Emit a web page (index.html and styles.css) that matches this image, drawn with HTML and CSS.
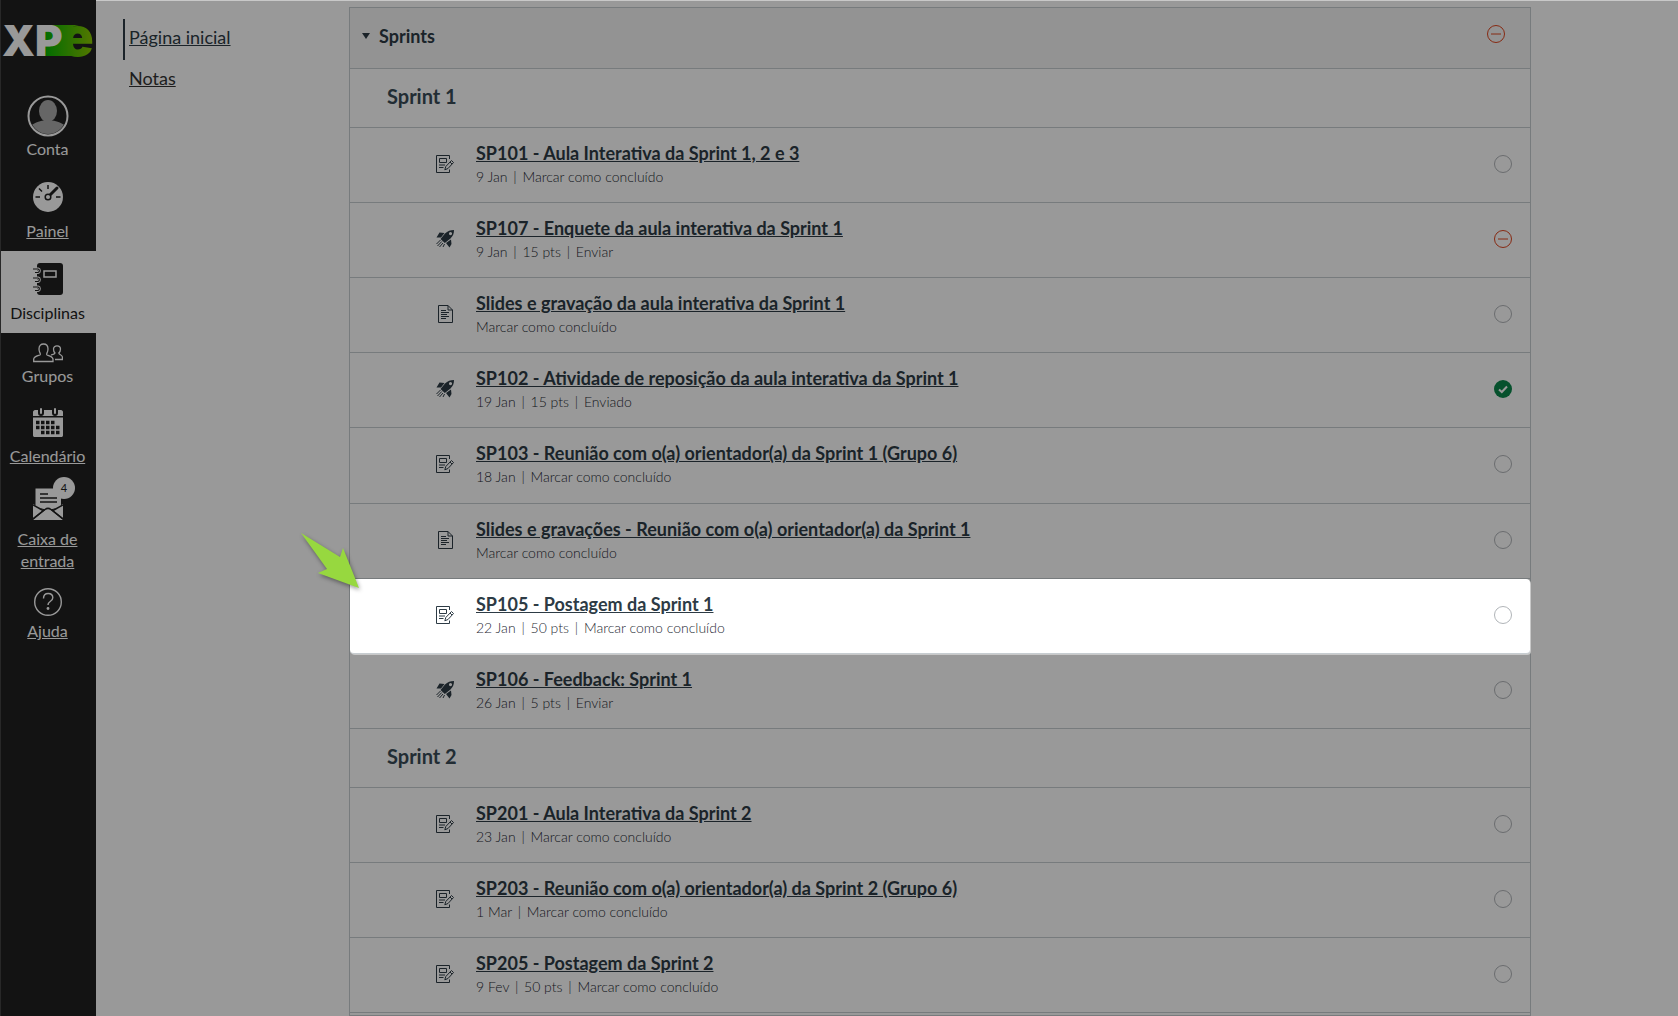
FILE: index.html
```
<!DOCTYPE html>
<html lang="pt-BR">

<head>
  <meta charset="UTF-8">
  <meta name="viewport" content="width=device-width, initial-scale=1">
  <title>Sprints</title>
  <link rel="stylesheet" href="styles.css">
</head>

<body>
  <svg class="symbols" aria-hidden="true">
    <symbol id="assignment" viewBox="0 0 18 18">
      <path d="M13.500 4V0.500H0.500V17.500H13.500V14.500" fill="none" stroke="currentColor"/>
      <path d="M3.500 3.500H10.500V7.500H3.500Z" fill="none" stroke="currentColor"/>
      <path d="M3 10H9M3 12.500H7.500" stroke="currentColor"/>
      <path d="M8.800 14.800L9.800 11.500L15.500 5.500L17.500 7.500L12 13.500Z" fill="none" stroke="currentColor"/>
      <path d="M14 7L16 9" stroke="currentColor"/>
    </symbol>
    <symbol id="page" viewBox="0 0 18 18">
      <path d="M2.500 0.500H12L16.500 5V17.500H2.500Z" fill="none" stroke="currentColor"/>
      <path d="M12 0.500V5H16.500" fill="none" stroke="currentColor"/>
      <path d="M5 5.500H10M5 7.500H13M5 9.500H11M5 11.500H13M5 13.500H10" stroke="currentColor"/>
    </symbol>
    <symbol id="quiz" viewBox="0 0 18 18">
      <path fill-rule="evenodd" d="M18 0C14.500 0 11.500 1 9 3.500L4.500 9L8.800 13L14.500 8.500C17 6 18 3.500 18 0ZM14.500 2A1.600 1.600 0 1 1 14.500 5.200A1.600 1.600 0 1 1 14.500 2Z" fill="currentColor"/>
      <path d="M8.500 3L3.500 2.500L0.500 7.500L5 7.500ZM15 9.500L15.500 14L13.500 17.500L10 13Z" fill="currentColor"/>
      <path d="M4.500 10L0.500 14M5.800 11.500L1.500 16M7 13L3.500 17M8.500 14L7 17" stroke="currentColor" fill="none"/>
    </symbol>
    <symbol id="todo" viewBox="0 0 18 18">
      <circle cx="9" cy="9" r="8.500" fill="none" stroke="currentColor"/>
    </symbol>
    <symbol id="minus" viewBox="0 0 18 18">
      <circle cx="9" cy="9" r="8.500" fill="none" stroke="currentColor"/>
      <path d="M4 9H14" stroke="currentColor"/>
    </symbol>
    <symbol id="done" viewBox="0 0 18 18">
      <circle cx="9" cy="9" r="9" fill="currentColor"/>
      <path d="M5 9.500L7.800 12L13 6.500" fill="none" stroke="#fff" stroke-width="2"/>
    </symbol>
  </svg>

  <div class="window-edge"></div>
  <div class="app">
    <nav class="global-nav">
      <a class="logo" href="#" aria-label="XPe">
        <svg width="95" height="83" viewBox="0 0 95 83">
          <defs>
            <linearGradient id="brand" gradientUnits="userSpaceOnUse" x1="43" y1="0" x2="92" y2="0">
              <stop offset="0" stop-color="#00b400"/>
              <stop offset="1" stop-color="#8cc800"/>
            </linearGradient>
          </defs>
          <path d="M42 56V25H78C68 26 65 34 65 41C65 49 70 56 78 56Z" fill="url(#brand)"/>
          <text class="logo-e" x="60" y="56" fill="url(#brand)">e</text>
          <text class="logo-xp" x="1" y="56">XP</text>
        </svg>
      </a>
      <a class="nav-item nav-item--plain" href="#">
        <svg width="42" height="44" viewBox="0 0 42 44">
          <defs>
            <clipPath id="face"><circle cx="21" cy="22" r="18"/></clipPath>
          </defs>
          <g clip-path="url(#face)" fill="#aaa">
            <ellipse cx="21" cy="17" rx="9" ry="11"/>
            <path d="M2 43V35C5 29 11 27 21 26C31 27 37 29 40 35V43Z"/>
          </g>
          <circle cx="21" cy="22" r="19.500" fill="none" stroke="#fff" stroke-width="2"/>
        </svg>
        Conta
      </a>
      <a class="nav-item" href="#">
        <svg width="30" height="41" viewBox="0 0 30 41">
          <circle cx="15" cy="18" r="15" fill="#fff"/>
          <path d="M15 6V10M2.500 18H7M23 18H27.500M6 9.500L9 12.500" stroke="#212121" stroke-width="1.500"/>
          <path d="M16 17L24 9" stroke="#212121" stroke-width="3" stroke-linecap="round"/>
          <circle cx="15" cy="18" r="2.800" fill="#fff" stroke="#212121" stroke-width="1.500"/>
        </svg>
        <span>Painel</span>
      </a>
      <a class="nav-item nav-item--active" href="#" aria-current="page">
        <svg width="30" height="41" viewBox="0 0 30 41">
          <path d="M7 2H27C29 2 30 3 30 5V31C30 33 29 34 27 34H7C5 34 4 33 4 31V5C4 3 5 2 7 2Z" fill="#212121"/>
          <path d="M11 10H23V16H11Z" fill="none" stroke="#fff" stroke-width="1.500"/>
          <path d="M0 8H5A1.800 1.800 0 0 1 5 11.500H2M0 17H5A1.800 1.800 0 0 1 5 20.500H2M0 26H5A1.800 1.800 0 0 1 5 29.500H2" fill="none" stroke="#fff" stroke-width="3"/>
          <path d="M0 8H5A1.800 1.800 0 0 1 5 11.500H2M0 17H5A1.800 1.800 0 0 1 5 20.500H2M0 26H5A1.800 1.800 0 0 1 5 29.500H2" fill="none" stroke="#212121" stroke-width="1.200"/>
        </svg>
        Disciplinas
      </a>
      <a class="nav-item nav-item--plain" href="#">
        <svg width="30" height="22" viewBox="0 0 30 22">
          <g fill="none" stroke="#fff" stroke-width="1.300">
            <path d="M0.700 18.500V16C1 13.500 4 13 7 12C8.500 11 6 10 6 6C6 2.500 8 1 10.500 1C13 1 15 2.500 15 6C15 10 12.500 11 14 12C17 13 19.500 13.500 20 16V18.500Z"/>
            <path d="M18 12C19.500 11.500 21.500 11.500 22 10C20.500 9 20.500 7 20.500 6C20.500 4 22 2.800 24 2.800C26 2.800 27.500 4 27.500 6C27.500 8 27 9 25.800 10C26 12 29 11.500 29.400 14V16.500H22"/>
          </g>
        </svg>
        Grupos
      </a>
      <a class="nav-item" href="#">
        <svg width="30" height="39" viewBox="0 0 30 39">
          <path d="M0 6C0 5 1 4 2 4H5V7A3 3 0 0 0 11 7V4H19V7A3 3 0 0 0 25 7V4H28C29 4 30 5 30 6V10H0ZM0 11.500H30V29C30 30.500 29.500 31 28 31H2C0.500 31 0 30.500 0 29Z" fill="#fff"/>
          <path d="M8 3V7M22 3V7" stroke="#fff" stroke-width="2" stroke-linecap="round"/>
          <path d="M3 16.500H22M3 21.500H27M8 26.500H27" stroke="#212121" stroke-width="3.500" stroke-dasharray="3.500 1.500"/>
        </svg>
        <span>Calendário</span>
      </a>
      <a class="nav-item nav-item--inbox" href="#">
        <svg width="30" height="42" viewBox="0 0 30 42">
          <path d="M2.500 2.500H28V21L15 24L2.500 21Z" fill="#fff"/>
          <path d="M7 8H15M7 12H24M7 16H24" stroke="#212121" stroke-width="1.500"/>
          <path d="M0 18L10 24L0 32ZM30 18L20 24L30 32ZM0 34L11 25L15 22L19 25L30 34Z" fill="#fff"/>
          <path d="M0 19L10 24.500M30 19L20 24.500M0 33L12 23.500C14 22 16 22 18 23.500L30 33" fill="none" stroke="#212121" stroke-width="1.500"/>
        </svg>
        <b class="badge">4</b>
        <span>Caixa de entrada</span>
      </a>
      <a class="nav-item nav-item--help" href="#">
        <svg width="30" height="33" viewBox="0 0 30 33">
          <circle cx="15" cy="15" r="13.300" fill="none" stroke="#fff" stroke-width="1.400"/>
          <path d="M10.500 11.500C10.500 8 12.500 6.500 15.200 6.500C18 6.500 19.800 8.300 19.800 10.800C19.800 14.500 15 14 15 18" fill="none" stroke="#fff" stroke-width="1.400"/>
          <circle cx="15" cy="21.500" r="1.400" fill="#fff"/>
        </svg>
        <span>Ajuda</span>
      </a>
    </nav>

    <nav class="course-menu">
      <a class="course-link course-link--active" href="#">Página inicial</a>
      <a class="course-link" href="#">Notas</a>
    </nav>

    <main class="module">
      <header class="module-header">
        <button class="module-toggle" type="button" aria-expanded="true">
          <svg width="8" height="6" viewBox="0 0 8 6"><path d="M0 0H8L4 6Z" fill="currentColor"/></svg>
          Sprints
        </button>
        <svg class="status status--late"><use href="#minus"/></svg>
      </header>

      <h2 class="group-title">Sprint 1</h2>
      <ul class="items">
        <li class="item">
          <svg class="type"><use href="#assignment"/></svg>
          <div class="info">
            <a class="title" href="#">SP101 - Aula Interativa da Sprint 1, 2 e 3</a>
            <p class="meta">9 Jan <i>|</i> Marcar como concluído</p>
          </div>
          <svg class="status"><use href="#todo"/></svg>
        </li>
        <li class="item">
          <svg class="type"><use href="#quiz"/></svg>
          <div class="info">
            <a class="title" href="#">SP107 - Enquete da aula interativa da Sprint 1</a>
            <p class="meta">9 Jan <i>|</i> 15 pts <i>|</i> Enviar</p>
          </div>
          <svg class="status status--late"><use href="#minus"/></svg>
        </li>
        <li class="item">
          <svg class="type"><use href="#page"/></svg>
          <div class="info">
            <a class="title" href="#">Slides e gravação da aula interativa da Sprint 1</a>
            <p class="meta">Marcar como concluído</p>
          </div>
          <svg class="status"><use href="#todo"/></svg>
        </li>
        <li class="item">
          <svg class="type"><use href="#quiz"/></svg>
          <div class="info">
            <a class="title" href="#">SP102 - Atividade de reposição da aula interativa da Sprint 1</a>
            <p class="meta">19 Jan <i>|</i> 15 pts <i>|</i> Enviado</p>
          </div>
          <svg class="status status--done"><use href="#done"/></svg>
        </li>
        <li class="item">
          <svg class="type"><use href="#assignment"/></svg>
          <div class="info">
            <a class="title" href="#">SP103 - Reunião com o(a) orientador(a) da Sprint 1 (Grupo 6)</a>
            <p class="meta">18 Jan <i>|</i> Marcar como concluído</p>
          </div>
          <svg class="status"><use href="#todo"/></svg>
        </li>
        <li class="item">
          <svg class="type"><use href="#page"/></svg>
          <div class="info">
            <a class="title" href="#">Slides e gravações - Reunião com o(a) orientador(a) da Sprint 1</a>
            <p class="meta">Marcar como concluído</p>
          </div>
          <svg class="status"><use href="#todo"/></svg>
        </li>
        <li class="item item--spotlight">
          <svg class="pointer" width="62" height="62" viewBox="0 0 62 62">
            <path d="M3 2L42 26L45 17L61 57L20 42L29 38Z" fill="#97d83f"/>
          </svg>
          <svg class="type"><use href="#assignment"/></svg>
          <div class="info">
            <a class="title" href="#">SP105 - Postagem da Sprint 1</a>
            <p class="meta">22 Jan <i>|</i> 50 pts <i>|</i> Marcar como concluído</p>
          </div>
          <svg class="status"><use href="#todo"/></svg>
        </li>
        <li class="item">
          <svg class="type"><use href="#quiz"/></svg>
          <div class="info">
            <a class="title" href="#">SP106 - Feedback: Sprint 1</a>
            <p class="meta">26 Jan <i>|</i> 5 pts <i>|</i> Enviar</p>
          </div>
          <svg class="status"><use href="#todo"/></svg>
        </li>
      </ul>

      <h2 class="group-title">Sprint 2</h2>
      <ul class="items">
        <li class="item">
          <svg class="type"><use href="#assignment"/></svg>
          <div class="info">
            <a class="title" href="#">SP201 - Aula Interativa da Sprint 2</a>
            <p class="meta">23 Jan <i>|</i> Marcar como concluído</p>
          </div>
          <svg class="status"><use href="#todo"/></svg>
        </li>
        <li class="item">
          <svg class="type"><use href="#assignment"/></svg>
          <div class="info">
            <a class="title" href="#">SP203 - Reunião com o(a) orientador(a) da Sprint 2 (Grupo 6)</a>
            <p class="meta">1 Mar <i>|</i> Marcar como concluído</p>
          </div>
          <svg class="status"><use href="#todo"/></svg>
        </li>
        <li class="item">
          <svg class="type"><use href="#assignment"/></svg>
          <div class="info">
            <a class="title" href="#">SP205 - Postagem da Sprint 2</a>
            <p class="meta">9 Fev <i>|</i> 50 pts <i>|</i> Marcar como concluído</p>
          </div>
          <svg class="status"><use href="#todo"/></svg>
        </li>
      </ul>
    </main>
  </div>
</body>

</html>
```
FILE: styles.css
```
* {
  box-sizing: border-box;
}

body {
  margin: 0;
  height: 100vh;
  display: flex;
  flex-direction: column;
  overflow: hidden;
  background: #fff;
  color: #2d3b45;
  font-family: Lato, "Liberation Sans", sans-serif;
  font-size: 16px;
}

.symbols {
  position: absolute;
  width: 0;
  height: 0;
}

.window-edge {
  position: relative;
  z-index: 2;
  height: 1px;
  flex: none;
  margin-left: 96px;
  background: #c8c8c8;
}

.app {
  flex: 1;
  display: flex;
  min-height: 0;
}

/* global navigation */
.global-nav {
  width: 96px;
  flex: none;
  margin-top: -1px;
  border-left: 1px solid #444;
  background: #212121;
}

.logo {
  display: block;
  height: 84px;
}

.logo-xp,
.logo-e {
  font-family: Inter, sans-serif;
  font-weight: 900;
}

.logo-xp {
  font-size: 42px;
  fill: #fff;
}

.logo-e {
  font-size: 54px;
}

.nav-item {
  position: relative;
  display: flex;
  flex-direction: column;
  align-items: center;
  padding: 10px 9px 9px 7px;
  color: #fff;
  line-height: 22px;
  text-align: center;
  font-size: 16px;
}

.nav-item--plain,
.nav-item--active {
  text-decoration: none;
}

.nav-item--active {
  background: #fff;
  color: #212121;
}

.nav-item--inbox {
  padding-bottom: 5px;
}

.badge {
  position: absolute;
  top: 1px;
  left: 52px;
  width: 22px;
  height: 22px;
  border-radius: 50%;
  background: #fff;
  color: #212121;
  font-size: 11px;
  font-weight: 400;
}

/* course menu */
.course-menu {
  width: 253px;
  flex: none;
  padding: 18px 27px;
}

.course-link {
  display: block;
  padding: 6px 4px 10px 6px;
  color: #333;
  font-size: 18px;
  line-height: 25px;
}

.course-link--active {
  padding-left: 4px;
  border-left: 2px solid #2d3b45;
  color: #2d3b45;
}

/* module list */
.module {
  flex: 1;
  margin: 6px 147px 0 0;
  border: 1px solid #c7cdd1;
}

.module-header {
  display: flex;
  justify-content: space-between;
  height: 61px;
  padding: 17px 25px 0 12px;
  border-bottom: 1px solid #c7cdd1;
  background: #f5f5f5;
}

.module-toggle {
  display: flex;
  align-items: center;
  gap: 9px;
  height: 22px;
  padding: 0;
  border: 0;
  background: none;
  color: inherit;
  font: 700 18px Lato, sans-serif;
}

.group-title {
  margin: 0;
  padding: 14px 37px 16px;
  border-bottom: 1px solid #c7cdd1;
  color: #394b58;
  font-size: 20px;
  font-weight: 700;
  line-height: 1.38;
}

.items {
  margin: 0;
  padding: 0;
  list-style: none;
}

.item {
  display: flex;
  align-items: center;
  padding: 0 18px 2px 86px;
  border-bottom: 1px solid #c7cdd1;
}

.type,
.status {
  width: 18px;
  height: 18px;
  flex: none;
}

.info {
  flex: 1;
  padding: 12px 22px 14px;
}

.title {
  color: #2d3b45;
  font-size: 18px;
  font-weight: 700;
  line-height: 27px;
}

.meta {
  margin: 1px 0 0;
  color: #1f2a33;
  font-size: 14px;
  font-weight: 300;
  line-height: 1.3;
}

.meta i {
  margin: 0 2px;
  font-style: normal;
}

.status {
  color: #b0b4b8;
}

.status--late {
  color: #e0461f;
}

.status--done {
  color: #0b874b;
}

/* the shadow dims everything around the highlighted row */
.item--spotlight {
  position: relative;
  z-index: 1;
  border-radius: 4px;
  background: #fff;
  box-shadow: 1px 1px 0 #c8c8c8, 0 0 0 9999px rgba(0, 0, 0, 0.4);
}

.pointer {
  position: absolute;
  top: -48px;
  left: -52px;
  filter: drop-shadow(1px 2px 2px rgba(0, 0, 0, 0.4));
}
```
